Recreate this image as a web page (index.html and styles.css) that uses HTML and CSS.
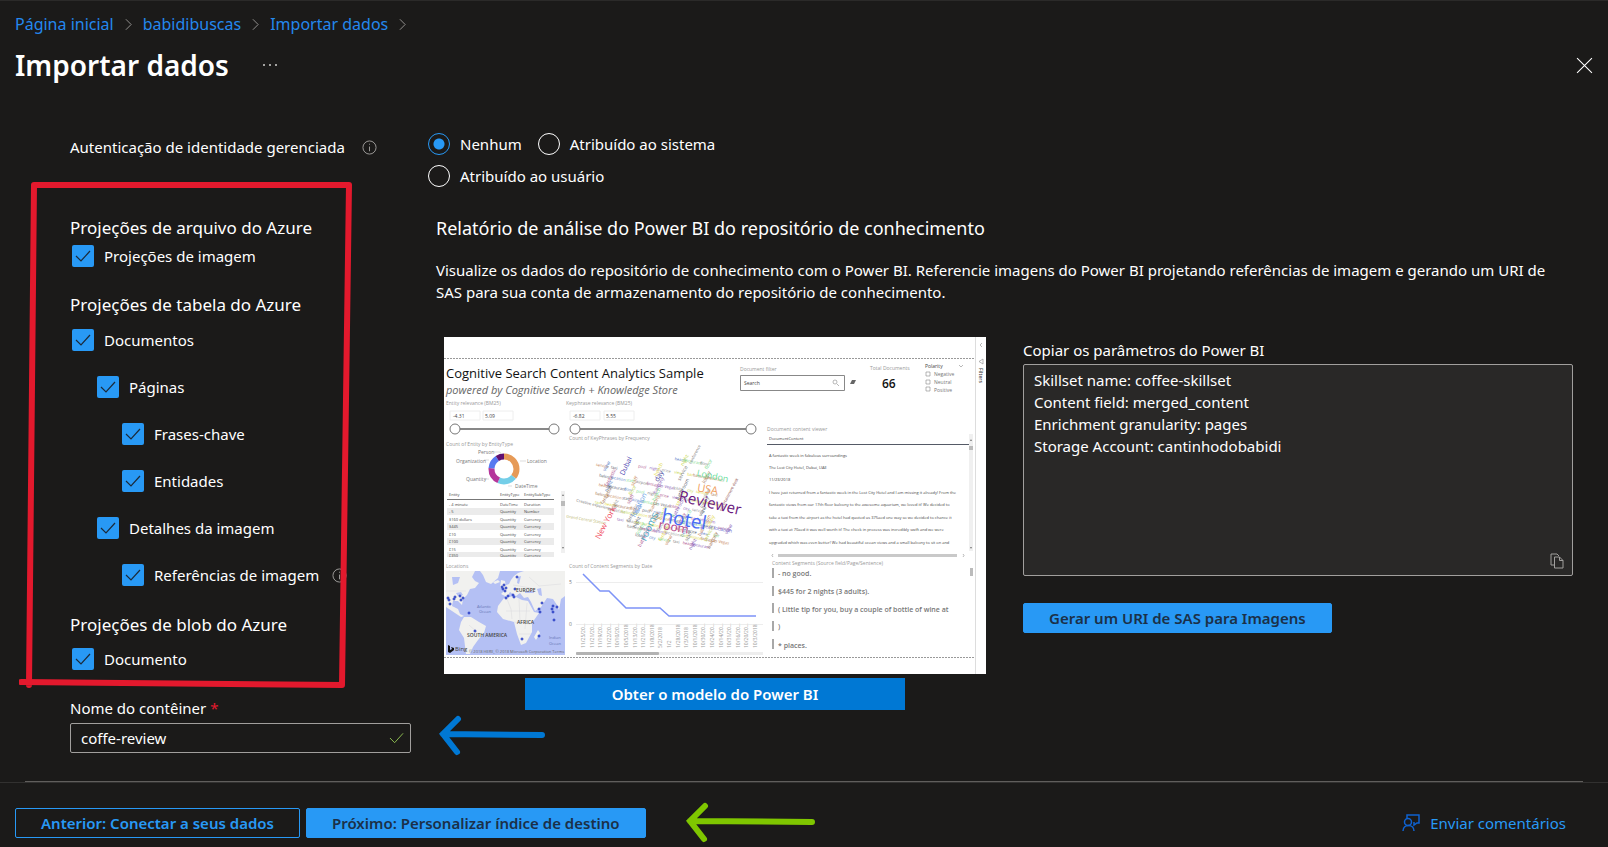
FILE: index.html
```html
<!DOCTYPE html>
<html lang="pt-BR">
<head>
<meta charset="utf-8">
<title>Importar dados</title>
<link rel="stylesheet" href="styles.css">
</head>
<body>
<header class="page-header">
  <nav class="breadcrumb" aria-label="Trilha">
    <a href="#">Página inicial</a>
    <svg class="chevron" viewBox="0 0 8 14"><path d="M1 1l6 6-6 6"/></svg>
    <a href="#">babidibuscas</a>
    <svg class="chevron" viewBox="0 0 8 14"><path d="M1 1l6 6-6 6"/></svg>
    <a href="#">Importar dados</a>
    <svg class="chevron" viewBox="0 0 8 14"><path d="M1 1l6 6-6 6"/></svg>
  </nav>
  <div class="title-row">
    <h1 class="title">Importar dados</h1>
    <button class="icon-button" aria-label="Mais opções"><svg class="more" viewBox="0 0 14 4"><circle cx="1" cy="2" r="1"/><circle cx="7" cy="2" r="1"/><circle cx="13" cy="2" r="1"/></svg></button>
    <button class="icon-button close" aria-label="Fechar"><svg class="close-icon" viewBox="0 0 16 16"><path d="M1 1l14 14M15 1L1 15"/></svg></button>
  </div>
</header>

<main class="content">
  <section class="settings">
    <div class="auth-label"><span id="auth">Autenticação de identidade gerenciada</span>
      <svg class="info" viewBox="0 0 16 16"><circle cx="8" cy="8" r="7"/><path d="M8 7v5M8 4v1"/></svg>
    </div>
    <div class="projections">
      <h2 class="group-title">Projeções de arquivo do Azure</h2>
      <label class="check"><input type="checkbox" checked>Projeções de imagem</label>
      <h2 class="group-title spaced">Projeções de tabela do Azure</h2>
      <div class="tree">
        <label class="check"><input type="checkbox" checked>Documentos</label>
        <label class="check level-1"><input type="checkbox" checked>Páginas</label>
        <label class="check level-2"><input type="checkbox" checked>Frases-chave</label>
        <label class="check level-2"><input type="checkbox" checked>Entidades</label>
        <label class="check level-1"><input type="checkbox" checked>Detalhes da imagem</label>
        <label class="check level-2"><input type="checkbox" checked>Referências de imagem
          <svg class="info" viewBox="0 0 16 16"><circle cx="8" cy="8" r="7"/><path d="M8 7v5M8 4v1"/></svg></label>
      </div>
      <h2 class="group-title blob">Projeções de blob do Azure</h2>
      <label class="check"><input type="checkbox" checked>Documento</label>
      <svg class="red-frame" viewBox="0 0 336 512"><path d="M15 5H330L323 505L2 502M15 5L10 505"/></svg>
    </div>
    <div class="container-field">
      <label for="container-name">Nome do contêiner <span class="required">*</span></label>
      <div class="input-wrap">
        <input id="container-name" class="text-input" type="text" value="coffe-review">
        <svg class="valid" viewBox="0 0 16 12"><path d="M1 6l5 5L15 1"/></svg>
        <svg class="blue-arrow" viewBox="0 0 110 42"><path d="M104 20L5 19M20 4L5 19L19 37"/></svg>
      </div>
    </div>
  </section>

  <section class="details">
    <div class="radios" role="radiogroup" aria-labelledby="auth">
      <label class="radio"><input type="radio" name="identity" checked>Nenhum</label>
      <label class="radio"><input type="radio" name="identity">Atribuído ao sistema</label>
      <label class="radio"><input type="radio" name="identity">Atribuído ao usuário</label>
    </div>
    <div class="report">
      <h2 class="report-title">Relatório de análise do Power BI do repositório de conhecimento</h2>
      <p class="report-text">Visualize os dados do repositório de conhecimento com o Power BI. Referencie imagens do Power BI projetando referências de imagem e gerando um URI de SAS para sua conta de armazenamento do repositório de conhecimento.</p>
      <div class="report-body">
        <div class="preview-col">
          <svg class="preview" viewBox="0 0 542 337" role="img" aria-label="Cognitive Search Content Analytics Sample">
            <defs>
              <clipPath id="map-clip"><rect x="2" y="234" width="119" height="84"/></clipPath>
              <clipPath id="table-clip"><rect x="0" y="150" width="120" height="70"/></clipPath>
              <clipPath id="doc-clip"><rect x="320" y="108" width="208" height="109"/></clipPath>
            </defs>
            <rect width="542" height="337" fill="#fff"/>
            <path class="dashed" d="M0 21.500H531M0 320.500H531"/>
            <path class="pale" d="M531.500 0V337"/>
            <text class="p-title" x="2" y="41">Cognitive Search Content Analytics Sample</text>
            <text class="p-sub" x="2" y="57">powered by Cognitive Search + Knowledge Store</text>
            <g class="cap">
              <text x="2" y="68">Entity relevance (BM25)</text>
              <text x="122" y="68">Keyphrase relevance (BM25)</text>
              <text x="2" y="109">Count of Entity by EntityType</text>
              <text x="125" y="103">Count of KeyPhrases by Frequency</text>
              <text x="296" y="34">Document filter</text>
              <text x="426" y="33">Total Documents</text>
              <text x="323" y="94">Document content viewer</text>
              <text x="2" y="231">Locations</text>
              <text x="125" y="231">Count of Content Segments by Date</text>
              <text x="328" y="228">Content Segments (Source field/Page/Sentence)</text>
            </g>
            <path class="faint" d="M6 74h30v9H6zM39 74h30v9H39zM126 74h30v9h-30zM160 74h30v9h-30z"/>
            <g class="tiny"><text x="9" y="81">-4.31</text><text x="41" y="81">5.09</text><text x="129" y="81">-6.82</text><text x="162" y="81">5.55</text></g>
            <path class="track" d="M11 92H110M131 92H307"/>
            <g class="knob"><circle cx="11" cy="92" r="5"/><circle cx="110" cy="92" r="5"/><circle cx="131" cy="92" r="5"/><circle cx="307" cy="92" r="5"/></g>

            <g fill="none" stroke-width="6" transform="rotate(-90 60 132)">
              <circle cx="60" cy="132" r="12.5" pathLength="100" stroke="#e69a57" stroke-dasharray="36 64"/>
              <circle cx="60" cy="132" r="12.5" pathLength="100" stroke="#74cee8" stroke-dasharray="21 79" stroke-dashoffset="-36"/>
              <circle cx="60" cy="132" r="12.5" pathLength="100" stroke="#b5369b" stroke-dasharray="19 81" stroke-dashoffset="-57"/>
              <circle cx="60" cy="132" r="12.5" pathLength="100" stroke="#5879f0" stroke-dasharray="15 85" stroke-dashoffset="-76"/>
              <circle cx="60" cy="132" r="12.5" pathLength="100" stroke="#610f70" stroke-dasharray="9 91" stroke-dashoffset="-91"/>
            </g>
            <path class="pale" d="M50 115h6l1 2M40 123h5M76 124h6M40 142h5M64 149h4"/>
            <g class="tiny muted"><text x="34" y="117">Person</text><text x="12" y="126">Organization</text><text x="22" y="144">Quantity</text><text x="83" y="126">Location</text><text x="71" y="151">DateTime</text></g>

            <g clip-path="url(#table-clip)">
              <path fill="#ebebeb" d="M3 171h107v7H3zM3 186h107v7H3zM3 201h107v7H3zM3 215h107v7H3z"/>
              <path stroke="#777" d="M3 162.500H110"/>
              <g class="cells">
                <text x="5" y="159">Entity</text><text x="56" y="159">EntityType</text><text x="80" y="159">EntitySubType</text>
                <text x="5" y="169">- 4 minute</text><text x="56" y="169">DateTime</text><text x="80" y="169">Duration</text>
                <text x="5" y="176">- 5</text><text x="56" y="176">Quantity</text><text x="80" y="176">Number</text>
                <text x="5" y="184">$160 dollars</text><text x="56" y="184">Quantity</text><text x="80" y="184">Currency</text>
                <text x="5" y="191">$445</text><text x="56" y="191">Quantity</text><text x="80" y="191">Currency</text>
                <text x="5" y="199">£10</text><text x="56" y="199">Quantity</text><text x="80" y="199">Currency</text>
                <text x="5" y="206">£100</text><text x="56" y="206">Quantity</text><text x="80" y="206">Currency</text>
                <text x="5" y="214">£15</text><text x="56" y="214">Quantity</text><text x="80" y="214">Currency</text>
                <text x="5" y="220">£350</text><text x="56" y="220">Quantity</text><text x="80" y="220">Currency</text>
              </g>
            </g>
            <path fill="#f0f0f0" d="M117 154h4v62h-4zM525 97h4v117h-4z"/>
            <path fill="#bbb" d="M117 164h4v5h-4zM525 109h4v4h-4zM526 231h3v8h-3z"/>
            <path fill="#777" d="M118 159l1-2 1 2zM118 210l1 2 1-2zM526 104l1-2 1 2zM526 210l1 2 1-2z"/>

            <g id="cloud" class="cloud"></g>

            <path class="box" d="M296.500 38.500H400.500V53.500H296.500z"/>
            <text class="tiny" x="300" y="48">Search</text>
            <circle class="thin" cx="391" cy="45" r="2"/><path class="thin" d="M393 47l2 2"/>
            <path fill="#666" d="M406 47l2-4h4l-2 4z"/>
            <text class="total" x="438" y="51">66</text>
            <text class="tiny dark" x="481" y="31">Polarity</text><path class="thin" d="M515 28l2 2 2-2"/>
            <path class="thin" d="M482 35h4v4h-4zM482 43h4v4h-4zM482 50h4v4h-4z"/>
            <g class="tiny muted"><text x="490" y="39">Negative</text><text x="490" y="47">Neutral</text><text x="490" y="55">Positive</text></g>
            <path class="thin" d="M538 6l-2 2 2 2M539 22v5l-4-2.500z"/>
            <text class="filters" transform="translate(535 31) rotate(90)">Filters</text>

            <text class="doc" x="325" y="103">DocumentContent</text>
            <path stroke="#555a66" d="M323 107.500H525"/>
            <g class="doc" clip-path="url(#doc-clip)">
              <text x="325" y="120">A fantastic week in fabulous surroundings</text>
              <text x="325" y="132">The Lost City Hotel, Dubai, UAE</text>
              <text x="325" y="144">11/23/2018</text>
              <text x="325" y="157">I have just returned from a fantastic week in the Lost City Hotel and I am missing it already! From the</text>
              <text x="325" y="169">fantastic views from our 17th floor balcony to the awesome aquarium, we loved it! We decided to</text>
              <text x="325" y="182">take a taxi from the airport as the hotel had quoted us 375aed one way so we decided to chance it</text>
              <text x="325" y="194">with a taxi at 70aed it was well worth it! The check in process was incredibly swift and we were</text>
              <text x="325" y="207">upgraded which was even better! We had beautiful ocean views and a small balcony to sit on and</text>
            </g>
            <path fill="#c9c9c9" d="M334 217h179v3H334z"/>
            <path class="thin" d="M329 217l-1 1.500 1 1.500M519 217l1 1.500-1 1.500"/>
            <path stroke="#8c8c8c" stroke-width="1.500" d="M329 231v10M329 249v10M329 266v10M329 284v10M329 302v10"/>
            <g class="seg"><text x="334" y="239">- no good.</text><text x="334" y="257">$445 for 2 nights (3 adults).</text><text x="334" y="275">( Little tip for you, buy a couple of bottle of wine at</text><text x="334" y="292">)</text><text x="334" y="311">* places.</text></g>

            <g clip-path="url(#map-clip)">
              <rect x="2" y="234" width="119" height="84" fill="#b4c0f4"/>
              <g fill="#f1f1ef">
                <path d="M2 234H31L28 240 31 244 35 246 31 251 26 252 23 258 19 262 18 268 14 264 9 264 8 269 14 272 16 277 20 279 17 280 11 276 2 270z"/>
                <path d="M36 234H56L54 241 47 247 42 245 39 238z"/>
                <path d="M20 280L27 280 35 285 42 289 40 296 34 303 29 310 26 317 22 317 20 301 15 293 17 285z"/>
                <path d="M57 257L60 254 60 249 65 247 67 243 70 239 74 236 80 234H121V259L117 262 115 273 113 268 109 262 103 261 97 270 91 274 87 265 84 260 80 261 76 256 72 259 66 255 63 260z"/>
                <path d="M60 261L70 259 78 263 84 264 90 275 95 276 88 286 88 295 82 306 77 308 73 297 70 285 59 282 53 275 54 269z"/>
                <path d="M94 293l-4 7 2 3 4-7zM57 243l4 1 1 6-6 1zM49 245l5-2 2 2-5 2z"/>
              </g>
              <path fill="#b4c0f4" d="M81 254h9v2h-9zM93 252l4-1 1 8-3-1zM74 240l3-1-2 8-2-1zM8 240h8l-2 6-5 2zM12 256l5-1 2 3-5 1z"/>
              <path fill="none" stroke="#d8d8dc" stroke-width="0.500" d="M63 262l4 10 1 10M75 262l1 22M83 266l-2 26M62 274h24M70 285l16 2M75 297h12M25 288l8 7M2 254h20M69 248l18 3M85 240l10 9 22-2"/>
              <g fill="#4057e0" stroke="#263bc2" fill-opacity="0.600">
                <circle cx="4" cy="261" r="1"/><circle cx="6" cy="267" r="1"/><circle cx="10" cy="262" r="1"/><circle cx="16" cy="259" r="1"/><circle cx="17" cy="263" r="1"/><circle cx="19" cy="261" r="1"/><circle cx="5" cy="263" r="1"/><circle cx="11" cy="260" r="1"/>
                <circle cx="25" cy="276" r="1"/><circle cx="31" cy="294" r="1"/><circle cx="58" cy="250" r="1"/><circle cx="60" cy="248" r="1"/><circle cx="62" cy="251" r="1"/><circle cx="59" cy="252" r="1"/><circle cx="61" cy="254" r="1"/><circle cx="73" cy="240" r="1"/><circle cx="71" cy="252" r="1"/><circle cx="64" cy="259" r="1"/><circle cx="69" cy="258" r="1"/><circle cx="62" cy="261" r="1"/><circle cx="70" cy="260" r="1"/><circle cx="98" cy="266" r="1"/><circle cx="95" cy="272" r="1"/><circle cx="96" cy="275" r="1"/><circle cx="109" cy="269" r="1"/><circle cx="109" cy="275" r="1"/><circle cx="113" cy="270" r="1"/><circle cx="110" cy="283" r="1"/><circle cx="78" cy="302" r="1"/><circle cx="95" cy="299" r="1"/><circle cx="108" cy="272" r="1"/>
              </g>
              <g class="map-label"><text x="72" y="255">EUROPE</text><text x="73" y="287">AFRICA</text><text x="23" y="300">SOUTH AMERICA</text></g>
              <g class="ocean"><text x="33" y="271">Atlantic</text><text x="35" y="276">Ocean</text><text x="105" y="302">Indian</text><text x="105" y="308">Ocean</text></g>
              <path fill="#111" d="M4 308l2 1v4l2-1-1-2 3 1v2l-4 3-2-1z"/><text class="bing" x="11" y="314">Bing</text>
              <text class="copyright" x="25" y="316">© 2018 HERE, © 2018 Microsoft Corporation Terms</text>
            </g>

            <path stroke="#ededed" d="M132 245.500H319M132 287.500H319"/>
            <g class="tiny muted"><text x="125" y="247">5</text><text x="125" y="289">0</text></g>
            <path fill="none" stroke="#7d93f7" stroke-width="1.500" d="M139 237L156 254H165L182 271H216L225 279H312"/>
            <g id="dates" class="dates"></g>
            <rect x="132" y="315" width="187" height="3" fill="#eee"/><rect x="132" y="315" width="83" height="3" rx="1" fill="#b3b3b3"/>
          </svg>
          <a class="template-button" href="#">Obter o modelo do Power BI</a>
        </div>
        <div class="params-col">
          <label for="params">Copiar os parâmetros do Power BI</label>
          <div class="params-box">
            <textarea id="params" class="params" readonly>Skillset name: coffee-skillset
Content field: merged_content
Enrichment granularity: pages
Storage Account: cantinhodobabidi</textarea>
            <button class="icon-button copy" aria-label="Copiar"><svg class="copy-icon" viewBox="0 0 14 16"><path d="M4 12H1V1h6l2 2M7 4H4.500V15H13V7.500L9.500 4H7M9.500 4v3.500H13"/></svg></button>
          </div>
          <button class="button primary">Gerar um URI de SAS para Imagens</button>
        </div>
      </div>
    </div>
  </section>
</main>

<hr class="divider">
<footer class="footer">
  <button class="button outline">Anterior: Conectar a seus dados</button>
  <button class="button primary next">Próximo: Personalizar índice de destino</button>
  <svg class="green-arrow" viewBox="0 0 132 42"><path d="M127 20L5 19M20 4L5 19L19 37"/></svg>
  <a class="feedback" href="#"><svg class="feedback-icon" viewBox="0 0 18 18"><path d="M5 4V1H17V9H15L12 11V8"/><circle cx="6" cy="8" r="3.500"/><path d="M1 17C1 9.500 12 9.500 12 17"/></svg>Enviar comentários</a>
</footer>
<script src="preview.js"></script>
</body>
</html>
```

FILE: styles.css
```css
* { box-sizing: border-box; }
body {
  margin: 0;
  min-height: 100vh;
  display: flex;
  flex-direction: column;
  background: #1b1a19;
  color: #fff;
  border-top: 1px solid #2b2a29;
  font: 15px/22px "Noto Sans", "Open Sans", sans-serif;
}
button, input, textarea { font: inherit; color: inherit; }
h1, h2, p { margin: 0; font-weight: 400; }
a { color: #2899f5; text-decoration: none; }
svg { display: block; flex: none; }

.page-header { padding: 12px 15px 0; }
.breadcrumb { display: flex; align-items: center; gap: 11px; font-size: 16px; }
.breadcrumb a { color: #2488ee; }
.chevron { width: 7px; height: 13px; fill: none; stroke: #a19f9d; }
.title-row { display: flex; align-items: center; height: 40px; margin-top: 10px; }
.title { font-size: 28px; line-height: 40px; font-weight: 600; }
.icon-button { padding: 0; border: 0; background: none; cursor: pointer; }
.title + .icon-button { margin-left: 34px; }
.more { width: 14px; height: 4px; fill: #d2d0ce; }
.close { margin-left: auto; }
.close-icon { width: 17px; height: 17px; fill: none; stroke: #fff; }

.content {
  flex: 1;
  display: grid;
  grid-template-columns: 341px minmax(0, 1fr);
  gap: 17px;
  padding: 48px 35px 28px 70px;
}
.settings { display: flex; flex-direction: column; }
.auth-label { display: flex; align-items: center; justify-content: space-between; width: 307px; margin-top: 3px; }
.info { width: 15px; height: 15px; fill: none; stroke: #a19f9d; }
.projections { position: relative; margin-top: 58px; }
.group-title { font-size: 17px; line-height: 24px; }
.check { display: flex; align-items: center; gap: 10px; height: 24px; padding-left: 2px; }
.group-title + .check { margin-top: 4px; }
.check .info { margin-left: 3px; }
.check input {
  appearance: none;
  flex: none;
  width: 22px;
  height: 22px;
  margin: 0;
  border-radius: 2px;
  background: #2899f5 url("data:image/svg+xml,%3Csvg xmlns='http://www.w3.org/2000/svg' viewBox='0 0 22 22'%3E%3Cpath d='M4 11l5 5 9-10' fill='none' stroke='%231b2a3a' stroke-width='1.2'/%3E%3C/svg%3E");
}
.spaced { margin-top: 25px; }
.tree { display: flex; flex-direction: column; gap: 23px; margin-top: 11px; }
.group-title.blob { margin-top: 26px; }
.group-title.blob + .check { margin-top: 10px; }
.level-1 { margin-left: 25px; }
.level-2 { margin-left: 50px; }
.red-frame { position: absolute; left: -51px; top: -36px; width: 336px; height: 512px; fill: none; stroke: #e3192d; stroke-width: 6; stroke-linecap: round; stroke-linejoin: round; }

.container-field { margin-top: 26px; }
.required { color: #e3192d; }
.input-wrap { position: relative; margin-top: 4px; }
.text-input { display: block; width: 100%; height: 30px; padding: 0 36px 0 10px; border: 1px solid #a19f9d; border-radius: 2px; background: #1b1a19; }
.valid { position: absolute; right: 7px; top: 9px; width: 15px; height: 12px; fill: none; stroke: #92c353; }
.blue-arrow { position: absolute; left: 100%; top: -8px; margin-left: 27px; width: 110px; height: 42px; fill: none; stroke: #0078d4; stroke-width: 6; stroke-linecap: round; }

.radios { display: flex; flex-wrap: wrap; gap: 10px 16px; max-width: 400px; }
.radio { display: flex; align-items: center; gap: 10px; }
.radio input { appearance: none; flex: none; width: 22px; height: 22px; margin: 0; border: 1px solid #fff; border-radius: 50%; }
.radio input:checked { border-color: #2899f5; background: radial-gradient(circle, #2899f5 5px, transparent 6px); }
.report { padding-left: 8px; }
.report-title { margin-top: 28px; font-size: 18px; line-height: 26px; }
.report-text { margin-top: 18px; padding-right: 8px; }
.report-body { display: flex; gap: 37px; margin-top: 34px; padding-left: 8px; }
.preview-col { flex: 0 1 542px; display: flex; flex-direction: column; align-items: center; gap: 4px; }
.preview { width: 100%; height: auto; font-family: "Open Sans", "Noto Sans", sans-serif; }
.template-button { width: 70%; line-height: 32px; background: #0078d4; color: #fff; font-weight: 600; text-align: center; }
.params-col { flex: 1; display: flex; flex-direction: column; align-items: flex-start; padding-top: 2px; }
.params-box { position: relative; width: 100%; margin-top: 3px; }
.params { display: block; width: 100%; height: 212px; padding: 4px 10px; border: 1px solid #a19f9d; border-radius: 2px; background: #292827; resize: none; outline: 0; }
.copy { position: absolute; right: 9px; bottom: 7px; }
.copy-icon { width: 14px; height: 16px; fill: none; stroke: #a19f9d; }
.button { height: 30px; padding: 0 25px; border: 1px solid #2899f5; border-radius: 2px; background: none; line-height: 22px; font-weight: 600; white-space: nowrap; cursor: pointer; }
.primary { background: #2899f5; color: #1b3048; }
.params-col .button { margin-top: 27px; }
.outline { color: #2899f5; }

.divider { width: auto; height: 1px; margin: 0 25px; border: 0; background: #605e5c; }
.footer { display: flex; align-items: center; gap: 6px; padding: 19px 42px 3px 15px; border-top: 1px solid #323130; }
.green-arrow { width: 132px; height: 42px; margin-left: 33px; fill: none; stroke: #7fc600; stroke-width: 6; stroke-linecap: round; }
.feedback { display: flex; align-items: center; gap: 10px; margin-left: auto; }
.feedback-icon { width: 18px; height: 18px; fill: none; stroke: #0f62d0; stroke-width: 1.500; }

.preview text { fill: #444; }
.preview .p-title { font-size: 13px; fill: #111; }
.preview .p-sub { font-size: 11px; font-style: italic; fill: #666; }
.preview .cap text { font-size: 5px; fill: #999; }
.preview .tiny { font-size: 5px; }
.preview .doc, .preview .cells { font-size: 4px; }
.preview .muted text { fill: #777; }
.preview .total { font-size: 12px; font-weight: 600; fill: #111; }
.preview .filters { font-size: 5px; font-weight: 600; }
.preview .seg text { font-size: 7px; font-weight: 600; fill: #777; }
.preview .map-label text { font-size: 5px; font-weight: 600; }
.preview .ocean text { font-size: 4px; fill: #6676b5; }
.preview .bing { font-size: 6px; }
.preview .copyright { font-size: 4px; fill: #666; }
.preview .dates text { font-size: 5px; fill: #999; }
.dashed { stroke: #999; stroke-dasharray: 2 1; }
.pale { fill: none; stroke: #ddd; }
.faint { fill: none; stroke: #eee; }
.track { stroke: #888; stroke-width: 2; }
.knob { fill: #fff; stroke: #777; }
.box { fill: none; stroke: #888; }
.thin { fill: none; stroke: #888; stroke-width: 0.600; }
.cloud text { text-anchor: middle; }
```

FILE: preview.js
```js
const NS = "http://www.w3.org/2000/svg";
function addText(parent, text, x, y, angle, size, color) {
  const node = document.createElementNS(NS, "text");
  node.textContent = text;
  node.setAttribute("transform", `translate(${x} ${y}) rotate(${angle})`);
  if (size) node.style.fontSize = size + "px";
  if (color) node.style.fill = color;
  parent.appendChild(node);
}

const cloud = document.getElementById("cloud");
const small = ["city", "beach", "pool", "view", "breakfast", "staff", "Las Vegas", "service", "restaurant", "night", "bar", "balcony", "airport", "lobby", "taxi", "floor", "price", "bathroom", "location", "fantastic"];
const colors = ["#a2724d", "#c7d84f", "#8a5fb8", "#777777", "#5a83c9", "#c98a5a", "#e2d93f", "#9a9a9a", "#b05a8f", "#7ddc8f", "#56606e"];
const rows = [[158, 130, 2], [236, 124, 3], [198, 131, 7], [162, 141, 10], [160, 150, 10], [158, 159, 9], [154, 167, 10], [172, 175, 10], [176, 184, 9], [192, 192, 8], [196, 200, 6]];
let n = 0;
rows.forEach(([x, y, count]) => {
  for (let i = 0; i < count; i++) {
    const cx = x + i * 12, cy = y + i * 2;
    n++;
    addText(cloud, small[n * 7 % 20], cx, cy, 11, 4, colors[n * 5 % 11]);
    if (n % 2) addText(cloud, small[n * 3 % 20], cx + 6, cy, -62, 4 + n % 2, colors[n * 4 % 11]);
  }
});
[
  ["Grand Central Station", 142, 184, 10, 4, "#b9b46a"],
  ["Creative experience", 150, 169, 14, 4, "#777777"],
  ["conference", 252, 118, -62, 4, "#777777"],
  ["entertainment desk", 286, 158, -62, 4, "#8c4a4a"],
  ["Dubai", 184, 130, -65, 7, "#4b3fb0"],
  ["New York", 164, 187, -62, 8, "#f04a5e"],
  ["location", 197, 169, -62, 7, "#6ea5e6"],
  ["rooms", 208, 191, -65, 10, "#4aa9c4"],
  ["day", 217, 140, -62, 7, "#4a4aa0"],
  ["London", 268, 142, 12, 9, "#6ce0a0"],
  ["USA", 263, 156, 10, 11, "#f0a060"],
  ["great location", 272, 193, 10, 5, "#6a6ad0"],
  ["room", 229, 194, 10, 12, "#b5468c"],
  ["hotel", 239, 189, 10, 19, "#4a6cf5"],
  ["Reviewer", 265, 171, 13, 15, "#6b1a80"]
].forEach(word => addText(cloud, ...word));

const dates = document.getElementById("dates");
["11/25/20…", "11/21/20…", "11/19/20…", "11/22/20…", "10/10/20…", "10/5/2018", "11/13/20…", "11/21/20…", "11/8/2018", "5/2/2018", "1/2", "1/28/2018", "1/3/2018", "10/1/2018", "10/30/20…", "10/24/20…", "10/14/20…", "10/31/20…", "10/16/20…", "10/20/20…", "10/3/2018"]
  .forEach((date, i) => addText(dates, date, 141 + Math.round(i * 8.6), 311, -90));
```
